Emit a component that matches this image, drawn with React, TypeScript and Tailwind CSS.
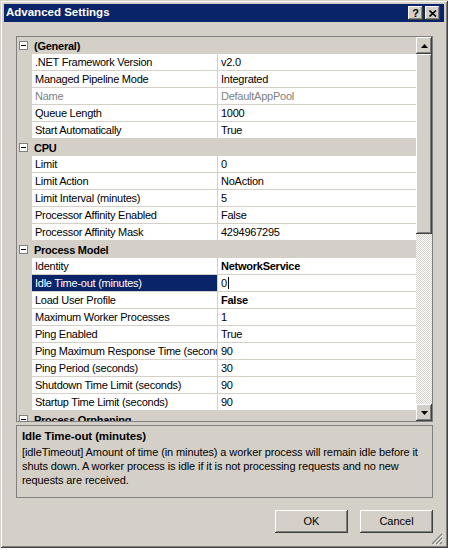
import React from "react";

type Prop = {
  name: string;
  value: string;
  bold?: boolean;
  disabled?: boolean;
  selected?: boolean;
};

type Category = {
  title: string;
  items: Prop[];
};

const categories: Category[] = [
  {
    title: "(General)",
    items: [
      { name: ".NET Framework Version", value: "v2.0" },
      { name: "Managed Pipeline Mode", value: "Integrated" },
      { name: "Name", value: "DefaultAppPool", disabled: true },
      { name: "Queue Length", value: "1000" },
      { name: "Start Automatically", value: "True" },
    ],
  },
  {
    title: "CPU",
    items: [
      { name: "Limit", value: "0" },
      { name: "Limit Action", value: "NoAction" },
      { name: "Limit Interval (minutes)", value: "5" },
      { name: "Processor Affinity Enabled", value: "False" },
      { name: "Processor Affinity Mask", value: "4294967295" },
    ],
  },
  {
    title: "Process Model",
    items: [
      { name: "Identity", value: "NetworkService", bold: true },
      { name: "Idle Time-out (minutes)", value: "0", selected: true },
      { name: "Load User Profile", value: "False", bold: true },
      { name: "Maximum Worker Processes", value: "1" },
      { name: "Ping Enabled", value: "True" },
      { name: "Ping Maximum Response Time (seconds)", value: "90" },
      { name: "Ping Period (seconds)", value: "30" },
      { name: "Shutdown Time Limit (seconds)", value: "90" },
      { name: "Startup Time Limit (seconds)", value: "90" },
    ],
  },
  // scrolled out of view below this one
  { title: "Process Orphaning", items: [] },
];

const raised =
  "shadow-[inset_-1px_-1px_0_#404040,inset_1px_1px_0_#ffffff,inset_-2px_-2px_0_#808080]";

const CategoryRow = ({ title }: { title: string }) => (
  <div className="flex h-[17px] shrink-0 items-center bg-[#d4d0c8]">
    <div className="ml-[2px] flex h-[9px] w-[9px] items-center justify-center border border-[#808080] bg-white">
      <div className="h-px w-[5px] bg-black" />
    </div>
    <span className="ml-[6px] font-bold leading-[16px]">{title}</span>
  </div>
);

const PropRow = ({ item }: { item: Prop }) => (
  <div className="flex h-[17px] shrink-0 border-b border-[#d4d0c8]">
    <div className="w-[15px] shrink-0 bg-[#d4d0c8]" />
    <div
      className={`w-[186px] shrink-0 overflow-hidden whitespace-nowrap border-r border-[#d4d0c8] pl-[3px] leading-[16px] ${
        item.selected
          ? "bg-[#0a246a] text-white"
          : item.disabled
          ? "bg-white text-[#808080]"
          : "bg-white"
      }`}
    >
      {item.name}
    </div>
    <div
      className={`flex min-w-0 flex-1 items-center overflow-hidden whitespace-nowrap bg-white pl-[3px] leading-[16px] ${
        item.bold ? "font-bold" : ""
      } ${item.disabled ? "text-[#808080]" : ""}`}
    >
      {item.value}
      {item.selected && <span className="ml-[1px] h-[12px] w-px bg-black" />}
    </div>
  </div>
);

const Arrow = ({ down }: { down?: boolean }) => (
  <svg width="7" height="4" viewBox="0 0 7 4">
    {down ? (
      <polygon points="0,0 7,0 3.5,4" fill="#000" />
    ) : (
      <polygon points="0,4 7,4 3.5,0" fill="#000" />
    )}
  </svg>
);

const ScrollBar = () => (
  <div className="flex w-[16px] shrink-0 flex-col bg-[image:repeating-conic-gradient(#d4d0c8_0_25%,#ffffff_0_50%)] bg-[length:2px_2px]">
    <div className={`flex h-[17px] shrink-0 items-center justify-center bg-[#d4d0c8] ${raised}`}>
      <Arrow />
    </div>
    <div className={`h-[180px] shrink-0 bg-[#d4d0c8] ${raised}`} />
    <div className="flex-1" />
    <div className={`flex h-[17px] shrink-0 items-center justify-center bg-[#d4d0c8] ${raised}`}>
      <Arrow down />
    </div>
  </div>
);

const CaptionButton = ({ children }: { children: React.ReactNode }) => (
  <div
    className={`flex h-[14px] w-[15px] items-center justify-center bg-[#d4d0c8] text-[11px] font-bold leading-none text-black ${raised}`}
  >
    {children}
  </div>
);

export default function App() {
  return (
    <div className="h-[550px] w-[450px] bg-white font-['Liberation_Sans',Arial,sans-serif] text-[11px] text-black">
      <div className="flex h-[548px] w-[448px] flex-col bg-[#d4d0c8] p-[4px] shadow-[inset_1px_1px_0_#d4d0c8,inset_-1px_-1px_0_#404040,inset_2px_2px_0_#ffffff,inset_-2px_-2px_0_#808080]">
        {/* title bar */}
        <div className="flex h-[18px] shrink-0 items-center bg-[#0a246a] pl-[2px] pr-[4px]">
          <span className="flex-1 text-[11.5px] font-bold text-white">Advanced Settings</span>
          <div className="flex gap-[2px]">
            <CaptionButton>?</CaptionButton>
            <CaptionButton>
              <svg width="8" height="7" viewBox="0 0 8 7">
                <path d="M0.5 0.5 L7 6.5 M7 0.5 L0.5 6.5" stroke="#000" strokeWidth="1.6" />
              </svg>
            </CaptionButton>
          </div>
        </div>

        <div className="flex flex-1 flex-col pl-[12px] pr-[11px] pt-[14px] tracking-[-0.25px]">
          {/* property grid */}
          <div className="flex h-[386px] shrink-0 border border-[#808080]">
            <div className="flex min-w-0 flex-1 flex-col overflow-hidden">
              {categories.map((cat) => (
                <React.Fragment key={cat.title}>
                  <CategoryRow title={cat.title} />
                  {cat.items.map((item) => (
                    <PropRow key={item.name} item={item} />
                  ))}
                </React.Fragment>
              ))}
            </div>
            <ScrollBar />
          </div>

          {/* description */}
          <div className="mt-[3px] flex h-[73px] shrink-0 flex-col border border-[#808080] px-[5px] pt-[3px] tracking-[-0.1px]">
            <div className="text-[11.5px] font-bold leading-[15px]">Idle Time-out (minutes)</div>
            <div className="mt-[1px] whitespace-nowrap leading-[14px]">
              <div>[idleTimeout] Amount of time (in minutes) a worker process will remain idle before it</div>
              <div>shuts down. A worker process is idle if it is not processing requests and no new</div>
              <div>requests are received.</div>
            </div>
          </div>

          {/* buttons */}
          <div className="mt-[12px] flex justify-end gap-[12px] tracking-normal">
            <button className={`h-[23px] w-[73px] bg-[#d4d0c8] ${raised}`}>OK</button>
            <button className={`h-[23px] w-[73px] bg-[#d4d0c8] ${raised}`}>Cancel</button>
          </div>

          <div className="flex flex-1 items-end justify-end">
            <svg width="12" height="12" viewBox="0 0 12 12" className="-mr-[10px] mb-[-1px]">
              <path d="M11 1 L1 11 M11 5 L5 11 M11 9 L9 11" stroke="#808080" strokeWidth="1.2" />
              <path d="M12 2 L2 12 M12 6 L6 12" stroke="#ffffff" strokeWidth="0.8" />
            </svg>
          </div>
        </div>
      </div>
    </div>
  );
}
